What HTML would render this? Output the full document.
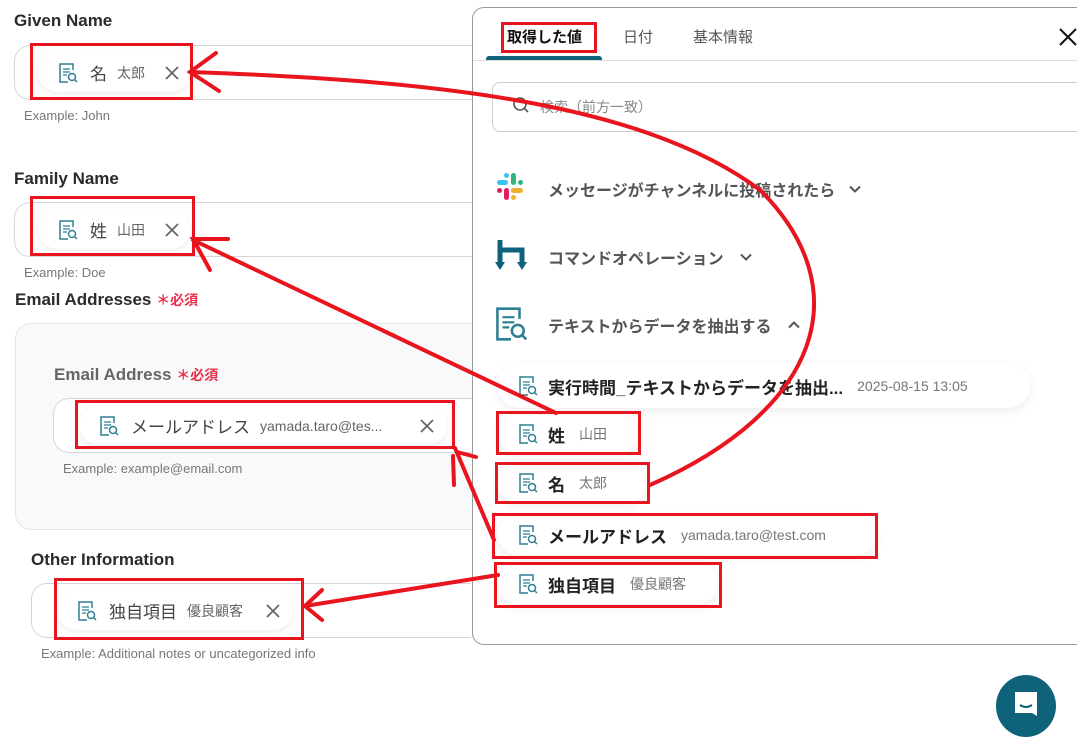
<!DOCTYPE html>
<html><head><meta charset="utf-8"><style>
*{box-sizing:border-box;margin:0;padding:0}
body{width:1077px;height:736px;overflow:hidden;background:#fff;position:relative;font-family:"Liberation Sans","Noto Sans CJK JP",sans-serif;color:#333}
.a{position:absolute}
.lbl{font-size:17px;font-weight:bold;color:#2b2b2b}
.inp{position:absolute;border:1px solid #d4d6dc;border-right:none;border-radius:16px 0 0 16px;background:#fff}
.ex{font-size:13px;color:#777;position:absolute}
.chip{position:absolute;background:#fff;border-radius:20px;box-shadow:0 2px 6px rgba(0,0,0,.08);display:flex;align-items:center;font-size:17px;color:#444}
.chip .v{font-size:14px;color:#666;margin-left:10px}
.chip .x{margin-left:auto}
.rb{position:absolute;border:3px solid #e8141e}
.req{color:#e8314e;font-size:14px;font-weight:bold}
.it{position:absolute;display:flex;align-items:center;font-size:16px;color:#555;font-weight:bold}
.pc{position:absolute;background:#fff;border-radius:22px;box-shadow:0 3px 10px rgba(0,0,0,.08);display:flex;align-items:center;font-size:17px;font-weight:bold;color:#222}
.pc .v{font-weight:normal;color:#777;font-size:14px;margin-left:14px}
</style></head><body>
<svg width="0" height="0" style="position:absolute"><defs>
<symbol id="doc" viewBox="0 0 20 22"><path d="M15 8V2H2v18h8" fill="none" stroke="#2f7f93" stroke-width="1.5"/><path d="M5 7h7M5 10h7M5 13h4" stroke="#2f7f93" stroke-width="1.3"/><circle cx="14" cy="15" r="3.5" fill="none" stroke="#2f7f93" stroke-width="1.5"/><path d="M16.5 17.5L19 20" stroke="#2f7f93" stroke-width="1.5"/></symbol>
<symbol id="x" viewBox="0 0 16 16"><path d="M2 2L14 14M14 2L2 14" stroke="#666" stroke-width="1.8"/></symbol>
<symbol id="dn" viewBox="0 0 12 8"><path d="M1 1.5L6 6.5L11 1.5" fill="none" stroke="#555" stroke-width="2"/></symbol>
</defs></svg>

<div class="a lbl" style="left:14px;top:11px">Given Name</div>
<div class="inp" style="left:14px;top:45px;width:460px;height:55px"></div>
<div class="chip" style="left:38px;top:53px;width:152px;height:39px;padding:0 10px 0 20px"><svg width="20" height="22"><use href="#doc"/></svg><span style="margin-left:12px">名</span><span class="v">太郎</span><svg class="x" width="16" height="16"><use href="#x"/></svg></div>
<div class="ex" style="left:24px;top:108px">Example: John</div>

<div class="a lbl" style="left:14px;top:169px">Family Name</div>
<div class="inp" style="left:14px;top:202px;width:460px;height:55px"></div>
<div class="chip" style="left:38px;top:210px;width:152px;height:39px;padding:0 10px 0 20px"><svg width="20" height="22"><use href="#doc"/></svg><span style="margin-left:12px">姓</span><span class="v">山田</span><svg class="x" width="16" height="16"><use href="#x"/></svg></div>
<div class="ex" style="left:24px;top:265px">Example: Doe</div>

<div class="a lbl" style="left:15px;top:290px">Email Addresses <span class="req">＊必須</span></div>
<div class="a" style="left:15px;top:323px;width:460px;height:207px;background:#f8f9fa;border:1px solid #e4e6ea;border-radius:16px 0 0 16px"></div>
<div class="a lbl" style="left:54px;top:365px;color:#666">Email Address <span class="req">＊必須</span></div>
<div class="inp" style="left:53px;top:398px;width:420px;height:55px"></div>
<div class="chip" style="left:79px;top:406px;width:368px;height:39px;padding:0 12px 0 20px"><svg width="20" height="22"><use href="#doc"/></svg><span style="margin-left:12px">メールアドレス</span><span class="v">yamada.taro@tes...</span><svg class="x" width="16" height="16"><use href="#x"/></svg></div>
<div class="ex" style="left:63px;top:461px">Example: example@email.com</div>

<div class="a lbl" style="left:31px;top:550px">Other Information</div>
<div class="inp" style="left:31px;top:583px;width:440px;height:55px"></div>
<div class="chip" style="left:57px;top:591px;width:236px;height:39px;padding:0 12px 0 20px"><svg width="20" height="22"><use href="#doc"/></svg><span style="margin-left:12px">独自項目</span><span class="v">優良顧客</span><svg class="x" width="16" height="16"><use href="#x"/></svg></div>
<div class="ex" style="left:41px;top:646px">Example: Additional notes or uncategorized info</div>

<!-- panel -->
<div class="a" style="left:472px;top:7px;width:620px;height:638px;border:1px solid #999;border-radius:12px;background:#fff"></div>
<div class="a" style="left:473px;top:60px;width:604px;height:1px;background:#ddd"></div>
<div class="a" style="left:486px;top:56px;width:116px;height:4px;background:#0e6279;border-radius:3px 3px 0 0"></div>
<div class="a" style="left:507px;top:26px;font-size:15px;font-weight:bold;color:#111">取得した値</div>
<div class="a" style="left:623px;top:26px;font-size:15px;color:#555">日付</div>
<div class="a" style="left:693px;top:26px;font-size:15px;color:#555">基本情報</div>
<svg class="a" style="left:1059px;top:28px" width="18" height="18"><path d="M1 1L17 17M17 1L1 17" stroke="#111" stroke-width="2"/></svg>
<div class="a" style="left:492px;top:82px;width:600px;height:50px;border:1px solid #ccc;border-radius:8px"></div>
<svg class="a" style="left:512px;top:96px" width="18" height="20"><circle cx="8" cy="8" r="6" fill="none" stroke="#555" stroke-width="1.6"/><path d="M12.5 12.5L16 16" stroke="#555" stroke-width="1.6"/></svg>
<div class="a" style="left:540px;top:97px;font-size:14px;color:#888">検索（前方一致）</div>

<svg class="a" style="left:497px;top:173px" width="28" height="30" viewBox="0 0 28 30">
<rect x="0" y="7" width="11" height="5" rx="2.5" fill="#36c5f0"/><rect x="7" y="0" width="5" height="5" rx="2.5" fill="#36c5f0"/>
<rect x="14" y="0" width="5" height="12" rx="2.5" fill="#2eb67d"/><rect x="21" y="7" width="5" height="5" rx="2.5" fill="#2eb67d"/>
<rect x="14" y="15" width="12" height="5" rx="2.5" fill="#ecb22e"/><rect x="14" y="22" width="5" height="5" rx="2.5" fill="#ecb22e"/>
<rect x="7" y="15" width="5" height="12" rx="2.5" fill="#e01e5a"/><rect x="0" y="15" width="5" height="5" rx="2.5" fill="#e01e5a"/></svg>
<div class="it" style="left:548px;top:177px">メッセージがチャンネルに投稿されたら <svg style="margin-left:14px" width="12" height="8"><use href="#dn"/></svg></div>
<svg class="a" style="left:495px;top:238px" width="34" height="36" viewBox="0 0 34 36"><path d="M5 2v26M5 12h22v16" fill="none" stroke="#0e6279" stroke-width="5"/><path d="M0 24h10L5 32zM22 24h10l-5 8z" fill="#0e6279"/></svg>
<div class="it" style="left:548px;top:245px">コマンドオペレーション <svg style="margin-left:16px" width="12" height="8"><use href="#dn"/></svg></div>
<svg class="a" style="left:494px;top:305px" width="34" height="38" viewBox="0 0 20 22"><use href="#doc"/></svg>
<div class="it" style="left:548px;top:313px">テキストからデータを抽出する <svg style="margin-left:16px;transform:rotate(180deg)" width="12" height="8"><use href="#dn"/></svg></div>

<div class="pc" style="left:498px;top:364px;width:532px;height:44px;padding-left:20px"><svg width="20" height="22"><use href="#doc"/></svg><span style="margin-left:10px">実行時間_テキストからデータを抽出...</span><span class="v">2025-08-15 13:05</span></div>
<div class="pc" style="left:498px;top:415px;width:140px;height:38px;padding-left:20px"><svg width="20" height="22"><use href="#doc"/></svg><span style="margin-left:10px">姓</span><span class="v">山田</span></div>
<div class="pc" style="left:498px;top:464px;width:150px;height:38px;padding-left:20px"><svg width="20" height="22"><use href="#doc"/></svg><span style="margin-left:10px">名</span><span class="v">太郎</span></div>
<div class="pc" style="left:498px;top:515px;width:378px;height:40px;padding-left:20px"><svg width="20" height="22"><use href="#doc"/></svg><span style="margin-left:10px">メールアドレス</span><span class="v">yamada.taro@test.com</span></div>
<div class="pc" style="left:498px;top:564px;width:220px;height:40px;padding-left:20px"><svg width="20" height="22"><use href="#doc"/></svg><span style="margin-left:10px">独自項目</span><span class="v">優良顧客</span></div>

<div class="a" style="left:996px;top:675px;width:60px;height:62px;border-radius:50%;background:#0e6279"></div>
<svg class="a" style="left:1012px;top:690px" width="28" height="30"><path d="M3 2h22v24l-5-3H3z" fill="#fff"/><path d="M8 15q6 4 12 0" fill="none" stroke="#0e6279" stroke-width="2"/></svg>

<!-- red boxes -->
<div class="rb" style="left:30px;top:43px;width:163px;height:57px"></div>
<div class="rb" style="left:30px;top:196px;width:165px;height:60px"></div>
<div class="rb" style="left:75px;top:400px;width:380px;height:49px"></div>
<div class="rb" style="left:54px;top:578px;width:250px;height:62px"></div>
<div class="rb" style="left:501px;top:22px;width:96px;height:31px"></div>
<div class="rb" style="left:496px;top:411px;width:145px;height:44px"></div>
<div class="rb" style="left:495px;top:462px;width:155px;height:42px"></div>
<div class="rb" style="left:492px;top:513px;width:386px;height:46px"></div>
<div class="rb" style="left:494px;top:562px;width:228px;height:46px"></div>

<svg class="a" style="left:0;top:0" width="1077" height="736" fill="none" stroke="#e8141e" stroke-width="4" stroke-linecap="round">
<path d="M190 72 C420 80 640 100 760 190 C860 290 820 410 650 485"/>
<path d="M216 53L190 72L219 91"/>
<path d="M556 413L193 240"/>
<path d="M228 239H193L210 270"/>
<path d="M494 540L455 448"/>
<path d="M453 456L454 485M457 452L476 457"/>
<path d="M498 575L305 606"/>
<path d="M322 590L305 606L322 620"/>
</svg>
</body></html>
